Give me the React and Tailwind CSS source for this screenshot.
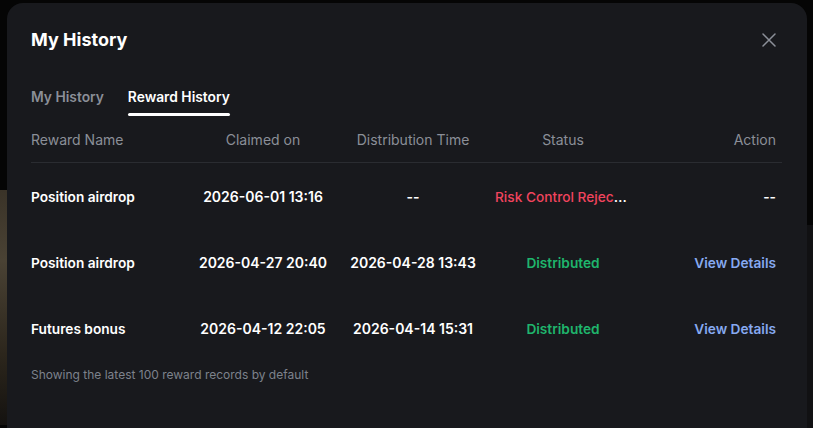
import React from 'react';

const rows = [
  { name: 'Position airdrop', claimed: '2026-06-01 13:16', dist: '--', status: 'Risk Control Rejected', kind: 'rejected', action: '--' },
  { name: 'Position airdrop', claimed: '2026-04-27 20:40', dist: '2026-04-28 13:43', status: 'Distributed', kind: 'ok', action: 'View Details' },
  { name: 'Futures bonus', claimed: '2026-04-12 22:05', dist: '2026-04-14 15:31', status: 'Distributed', kind: 'ok', action: 'View Details' },
];

const cols = 'grid grid-cols-[157px_150px_150px_150px_1fr] items-center';

export default function App() {
  return (
    <div className="relative h-[428px] w-[813px] overflow-hidden bg-[#050505]" style={{ fontFamily: 'Inter, "Noto Sans", sans-serif' }}>
      {/* backdrop image peeking out on the left */}
      <div className="absolute left-0 top-[190px] h-[235px] w-[10px] bg-[linear-gradient(180deg,#3a3328_0%,#4a4234_30%,#2c261c_70%,#141210_100%)]" />
      <div className="absolute right-0 top-[225px] h-[210px] w-[6px] bg-[#111113]" />

      <div className="relative ml-[7px] mt-[3px] h-[440px] w-[800px] rounded-t-[16px] bg-[#18191d] px-6 pt-[23px]">
        <div className="flex items-center justify-between">
          <h1 className="text-[18px] font-bold leading-7 text-white">My History</h1>
          <button className="mr-[6px] text-[#8b8f98]">
            <svg width="16" height="16" viewBox="0 0 16 16" fill="none" stroke="currentColor" strokeWidth="1.5" strokeLinecap="round">
              <path d="M2 2L14 14M14 2L2 14" />
            </svg>
          </button>
        </div>

        <div className="mt-[33px] flex gap-[24px] text-[13.8px] font-semibold leading-5">
          <div className="pb-[6px] text-[#8b8f98]">My History</div>
          <div className="flex flex-col items-stretch text-white">
            <span>Reward History</span>
            <span className="mt-[6px] h-[3px] rounded-full bg-white" />
          </div>
        </div>

        <div className="mr-[1px]">
          <div className={`${cols} h-[47px] border-b border-[#2a2c31] text-[14px] text-[#8b8f98]`}>
            <div>Reward Name</div>
            <div className="text-center">Claimed on</div>
            <div className="text-center">Distribution Time</div>
            <div className="text-center">Status</div>
            <div className="pr-[6px] text-right">Action</div>
          </div>

          {rows.map((r, i) => (
            <div key={i} className={`${cols} h-[66px] pt-[2px] text-[13.7px] font-semibold leading-5 text-white`}>
              <div>{r.name}</div>
              <div className="text-center text-[14px]">{r.claimed}</div>
              <div className="text-center text-[14px]">{r.dist}</div>
              <div className="flex justify-center">
                {r.kind === 'rejected' ? (
                  <div className="w-[136px] truncate text-white">
                    <span className="font-medium text-[#f0445e]">{r.status}</span>
                  </div>
                ) : (
                  <span className="text-[#1fb56c]">{r.status}</span>
                )}
              </div>
              <div className={`pr-[6px] text-right ${r.action === '--' ? 'text-white' : 'text-[#86a9f0]'}`}>{r.action}</div>
            </div>
          ))}
        </div>

        <p className="mt-[6px] text-[12px] leading-4 text-[#7d828c]">Showing the latest 100 reward records by default</p>
      </div>
    </div>
  );
}
